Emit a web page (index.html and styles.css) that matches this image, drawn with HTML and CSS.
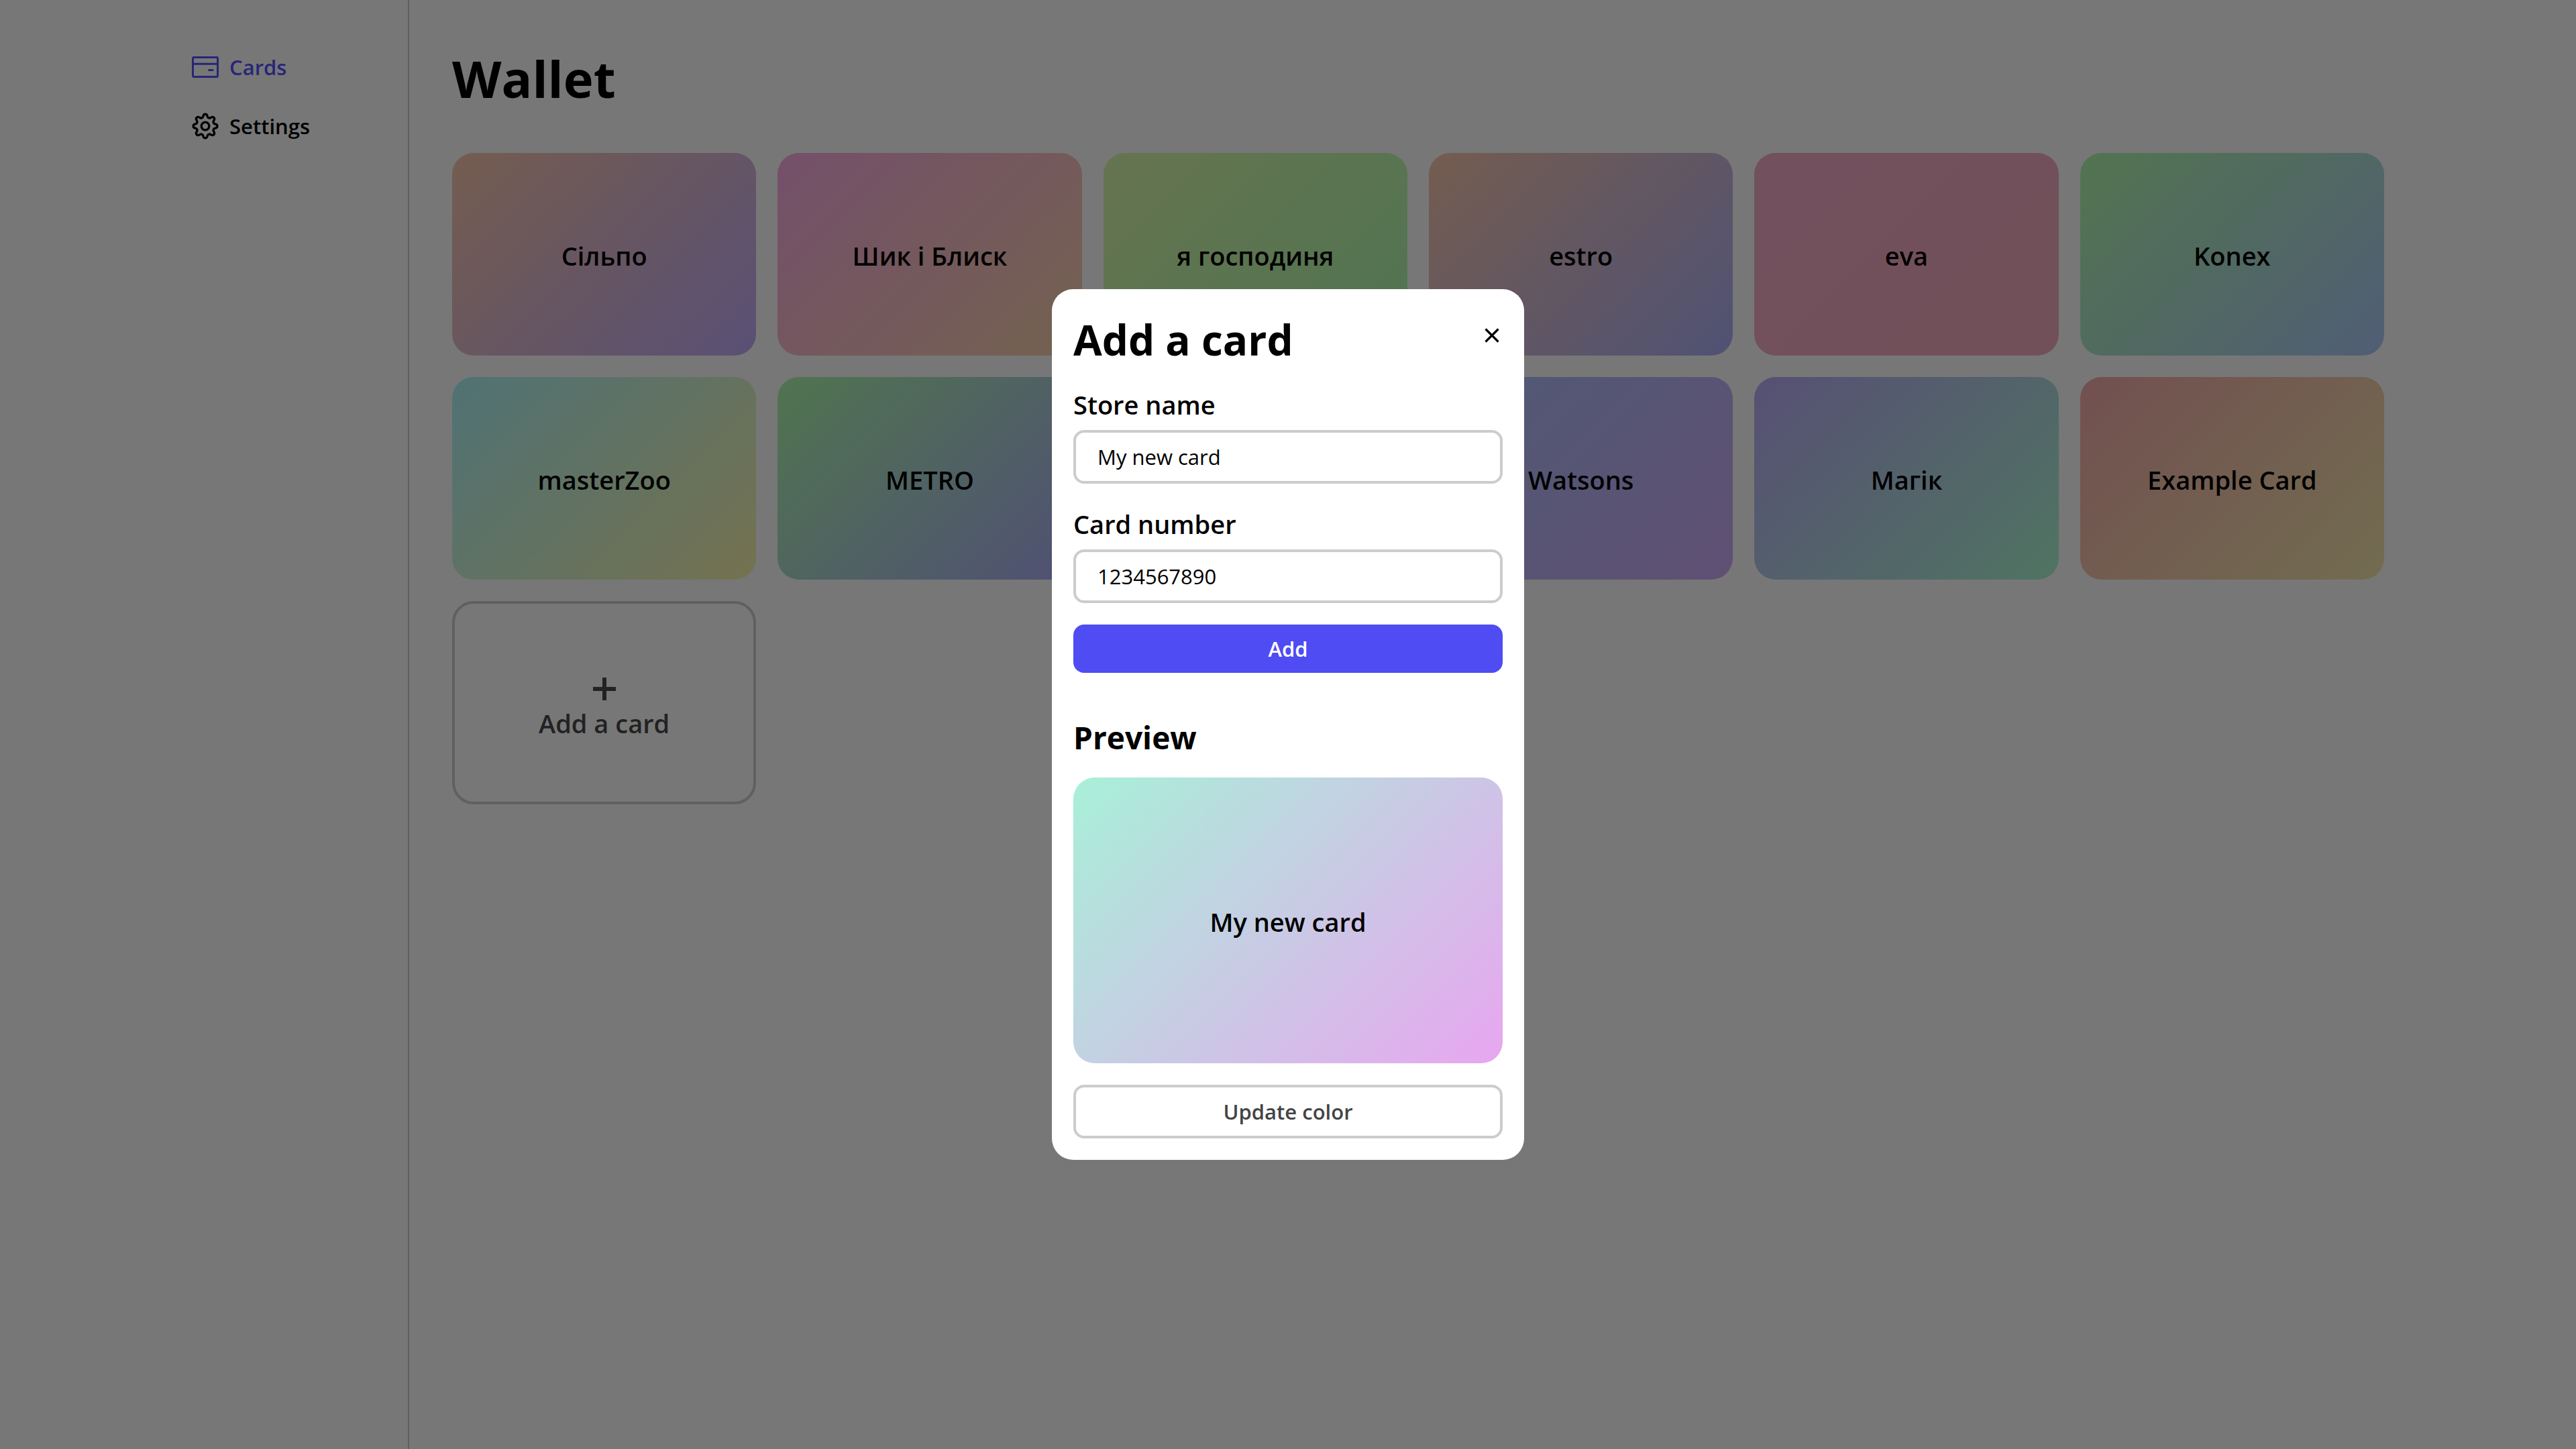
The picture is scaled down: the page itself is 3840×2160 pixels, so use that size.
FILE: index.html
```html
<!DOCTYPE html>
<html lang="en">
<head>
<meta charset="utf-8">
<title>Wallet</title>
<link rel="stylesheet" href="styles.css">
</head>
<body>
<div class="app">
  <nav class="sidebar">
    <a class="nav-link active" href="#cards">
      <svg class="nav-icon" viewBox="0 0 20 20" fill="none" stroke="currentColor" stroke-width="1.5"><rect x="0.75" y="2.75" width="18.5" height="14.5" rx="0.7"/><path d="M.75 7.6h18.5M12.75 12.25h2.8" stroke-linecap="round"/></svg>
      <span>Cards</span>
    </a>
    <a class="nav-link" href="#settings">
      <svg class="nav-icon" viewBox="0 0 24 24" fill="none" stroke="currentColor" stroke-width="2" stroke-linejoin="round"><circle cx="12" cy="12" r="3.5"/><path d="M10.3 2.6a1.75 1.75 0 0 1 3.4 0l.3 1a1.8 1.8 0 0 0 2.5 1l1-.5a1.75 1.75 0 0 1 2.4 2.4l-.5 1a1.8 1.8 0 0 0 1 2.5l1 .3a1.75 1.75 0 0 1 0 3.4l-1 .3a1.8 1.8 0 0 0-1 2.5l.5 1a1.75 1.75 0 0 1-2.4 2.4l-1-.5a1.8 1.8 0 0 0-2.5 1l-.3 1a1.75 1.75 0 0 1-3.4 0l-.3-1a1.8 1.8 0 0 0-2.5-1l-1 .5a1.75 1.75 0 0 1-2.4-2.4l.5-1a1.8 1.8 0 0 0-1-2.5l-1-.3a1.75 1.75 0 0 1 0-3.4l1-.3a1.8 1.8 0 0 0 1-2.5l-.5-1a1.75 1.75 0 0 1 2.4-2.4l1 .5a1.8 1.8 0 0 0 2.5-1z"/></svg>
      <span>Settings</span>
    </a>
  </nav>
  <main class="content">
    <h1 class="page-title">Wallet</h1>
    <div class="grid">
      <button class="card peach-violet">Сільпо</button>
      <button class="card orchid-sand">Шик і Блиск</button>
      <button class="card lime-green">я господиня</button>
      <button class="card peach-indigo">estro</button>
      <button class="card rose">eva</button>
      <button class="card green-blue">Konex</button>
      <button class="card aqua-yellow">masterZoo</button>
      <button class="card green-indigo">METRO</button>
      <button class="card green-blue" aria-label="Store card"></button>
      <button class="card blue-violet">Watsons</button>
      <button class="card violet-mint">Магік</button>
      <button class="card red-yellow">Example Card</button>
      <button class="card add-card">
        <svg class="plus" viewBox="0 0 34 34" stroke="currentColor" stroke-width="6"><path d="M17 0v34M0 17h34"/></svg>
        <span>Add a card</span>
      </button>
    </div>
  </main>
</div>
<div class="overlay">
  <section class="dialog" role="dialog" aria-modal="true" aria-labelledby="dialog-title">
    <header class="dialog-head">
      <h2 class="dialog-title" id="dialog-title">Add a card</h2>
      <button class="close" aria-label="Close"><svg class="cross" viewBox="0 0 22 22" stroke="currentColor" stroke-width="3.2"><path d="M1.5 1.5l19 19M20.5 1.5l-19 19"/></svg></button>
    </header>
    <form class="form">
      <label class="label" for="store">Store name</label>
      <input class="input" id="store" type="text" value="My new card">
      <label class="label" for="number">Card number</label>
      <input class="input" id="number" type="text" value="1234567890">
      <button class="button primary" type="button">Add</button>
    </form>
    <h3 class="preview-title">Preview</h3>
    <div class="card preview mint-pink">My new card</div>
    <button class="button outline">Update color</button>
  </section>
</div>
</body>
</html>
```

FILE: styles.css
```css
* { box-sizing: border-box; }

body {
  margin: 0;
  background: #eee;
  color: #000;
  font-family: "Open Sans", "Noto Sans", sans-serif;
}

button, input { font: inherit; color: inherit; margin: 0; }
button { cursor: pointer; }
h1, h2, h3 { margin: 0; font-weight: 700; }

.app {
  display: flex;
  min-height: 100vh;
  max-width: 3268px;
  margin: 0 auto;
}

.sidebar {
  flex: none;
  width: 324px;
  border-right: 2px solid #c0c0c0;
  padding-top: 56px;
  display: flex;
  flex-direction: column;
}

.nav-link {
  display: flex;
  align-items: center;
  gap: 16px;
  height: 88px;
  color: #000;
  text-decoration: none;
  font-size: 31px;
  font-weight: 600;
}
.nav-link.active { color: #4f4cf3; }
.nav-icon { width: 40px; height: 40px; }

.content { flex: 1; padding: 64px 0 64px 64px; }

.page-title {
  font-size: 76px;
  line-height: 106px;
  margin-bottom: 58px;
}

.grid {
  display: grid;
  grid-template-columns: repeat(auto-fill, minmax(400px, 1fr));
  gap: 32px;
}

.card {
  display: flex;
  align-items: center;
  justify-content: center;
  aspect-ratio: 3 / 2;
  padding: 4px 0 0;
  border: 0;
  border-radius: 32px;
  font-size: 38px;
  font-weight: 600;
}

.peach-violet { background: linear-gradient(135deg, #e9b9a0, #b3a0e9); }
.orchid-sand { background: linear-gradient(135deg, #e9a0d5, #e9c4a0); }
.lime-green { background: linear-gradient(135deg, #cde9a0, #a0e9a3); }
.peach-indigo { background: linear-gradient(135deg, #e9b9a0, #a0a4e9); }
.rose { background: linear-gradient(135deg, #e4a0bc, #e4a0b2); }
.green-blue { background: linear-gradient(135deg, #a5e9a0, #a0bce9); }
.aqua-yellow { background: linear-gradient(135deg, #a0e4e9, #e9e5a0); }
.green-indigo { background: linear-gradient(135deg, #a0e9a0, #a0a0e9); }
.blue-violet { background: linear-gradient(135deg, #a0b4e9, #bfa0e9); }
.violet-mint { background: linear-gradient(135deg, #aea0e9, #a0e9c4); }
.red-yellow { background: linear-gradient(135deg, #e4a0a0, #e4d9a0); }
.mint-pink { background: linear-gradient(135deg, #a8f0d8, #e8a6f0); }

.add-card {
  flex-direction: column;
  background: transparent;
  border: 4px solid #c0c0c0;
  color: #444;
  gap: 8px;
  padding-top: 18px;
}
.plus { width: 34px; height: 34px; }

.overlay {
  position: fixed;
  inset: 0;
  display: flex;
  align-items: center;
  justify-content: center;
  background: rgba(0, 0, 0, 0.5);
}

.dialog {
  width: 704px;
  padding: 32px;
  border-radius: 32px;
  background: #fff;
}

.dialog-head {
  display: flex;
  justify-content: space-between;
  align-items: flex-start;
}
.dialog-title { font-size: 62px; line-height: 86px; }
.close {
  display: flex;
  padding: 26px 5px;
  border: 0;
  background: none;
}
.cross { width: 22px; height: 22px; }

.form { display: flex; flex-direction: column; }
.label {
  font-size: 38px;
  font-weight: 600;
  line-height: 52px;
  margin: 26px 0 12px;
}
.dialog-head + .form { padding-top: 2px; }
.input {
  height: 80px;
  padding: 0 32px;
  border: 4px solid #ccc;
  border-radius: 16px;
  background: #fff;
  font-size: 31px;
}
.input + .label { margin-top: 34px; }

.button {
  width: 100%;
  height: 80px;
  padding: 0;
  border-radius: 16px;
  font-size: 31px;
  font-weight: 600;
}
.primary {
  height: 72px;
  margin-top: 32px;
  border: 0;
  background: #4f4cf3;
  color: #fff;
}
.outline {
  border: 4px solid #ccc;
  background: #fff;
  color: #444;
}

.preview-title {
  font-size: 46px;
  line-height: 64px;
  margin: 64px 0 28px;
}
.preview { margin-bottom: 32px; }
```
